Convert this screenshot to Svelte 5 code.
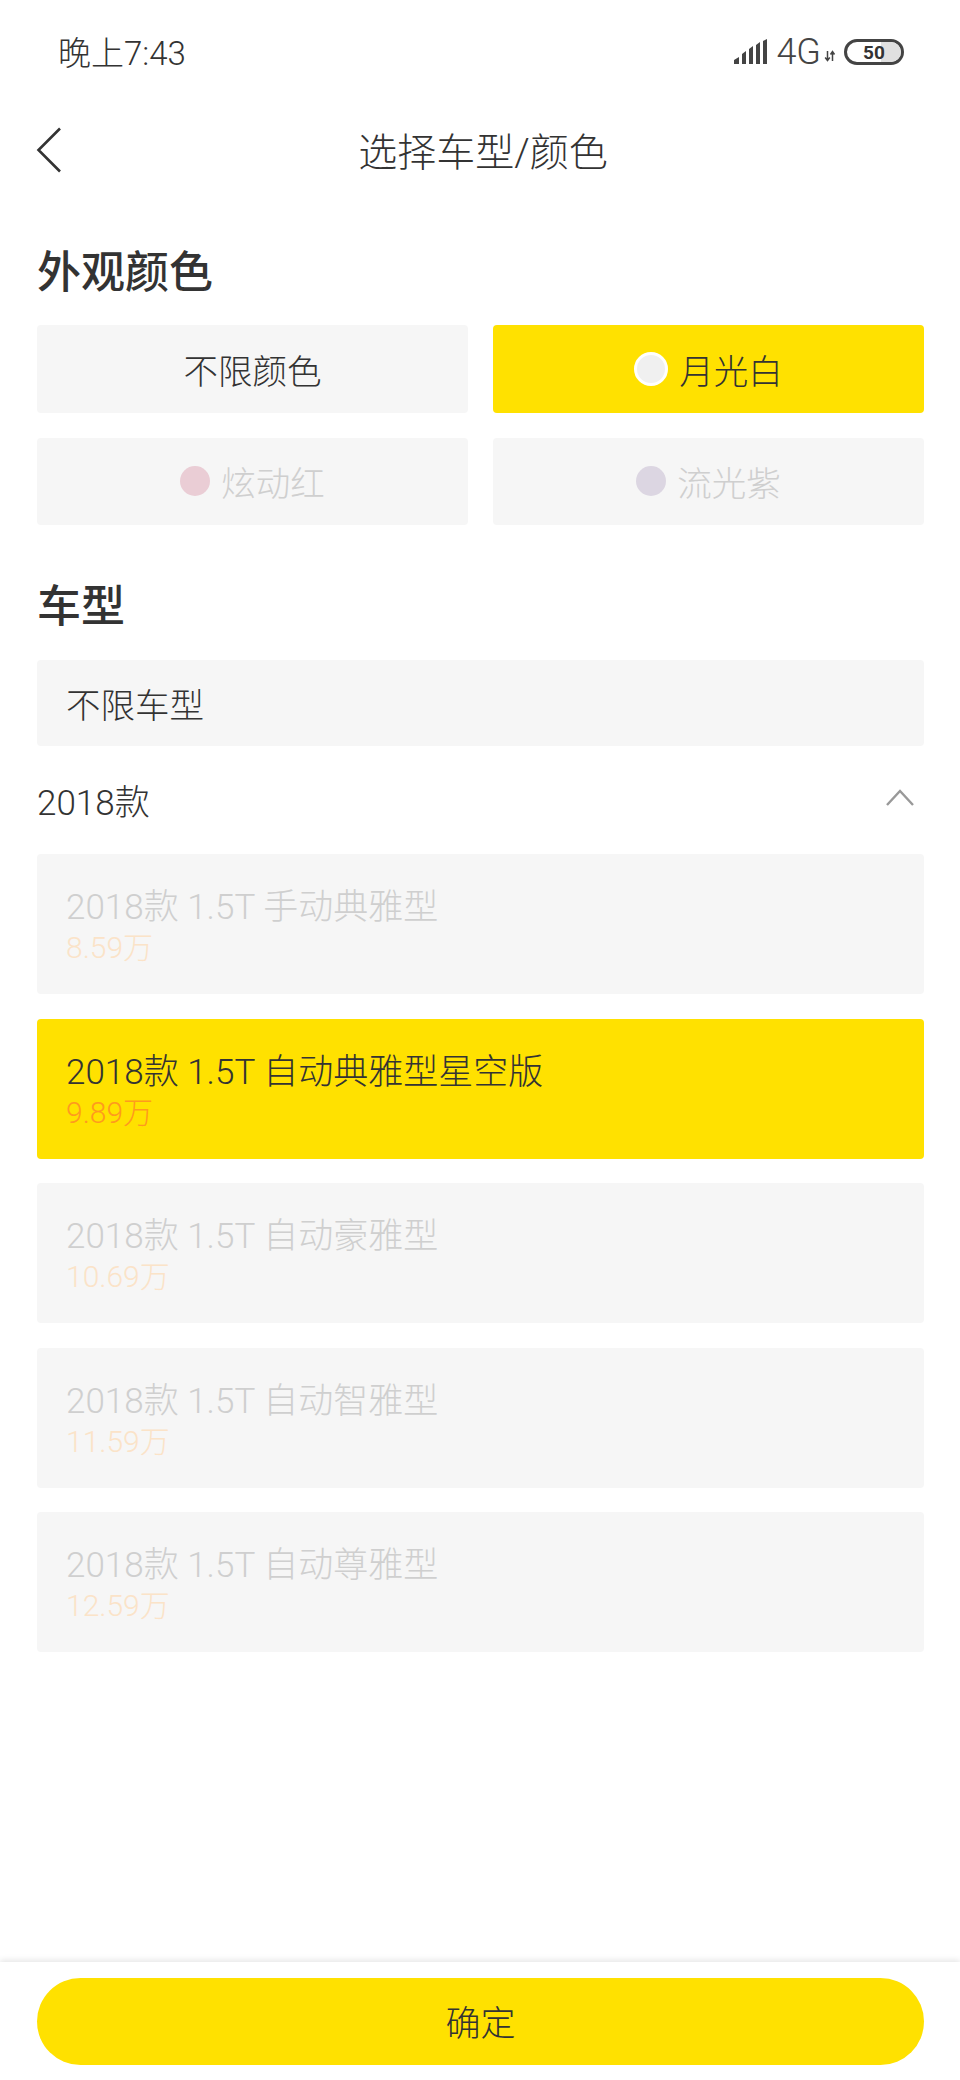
<script>
const colors = [
  { name: '不限颜色' },
  { name: '月光白', dot: '#f0f0f0', active: true },
  { name: '炫动红', dot: '#eacdd5', off: true },
  { name: '流光紫', dot: '#dcd6e2', off: true }
];

const models = [
  { name: '2018款 1.5T 手动典雅型', price: '8.59万', off: true },
  { name: '2018款 1.5T 自动典雅型星空版', price: '9.89万', active: true },
  { name: '2018款 1.5T 自动豪雅型', price: '10.69万', off: true },
  { name: '2018款 1.5T 自动智雅型', price: '11.59万', off: true },
  { name: '2018款 1.5T 自动尊雅型', price: '12.59万', off: true }
];
</script>

<div class="page">
  <div class="status">
    <span class="time">晚上7:43</span>
    <div class="indicators">
      <svg class="signal" width="36" height="26" viewBox="0 0 36 26">
        <path d="M1 25v-4l5-3v7zM9 25V15l4-3v13zM16 25V10l4-3v18zM23 25V6l4-3v22zM30 25V2l4-2v25z" fill="#444" />
      </svg>
      <span class="net">4G</span>
      <svg class="arrows" width="12" height="14" viewBox="0 0 12 14">
        <path d="M3.5 2v9M1.2 8.5l2.3 3 2.3-3M8.5 12V3M6.5 5.5l2-3 2 3" fill="none" stroke="#444" stroke-width="1.5" />
      </svg>
      <div class="battery">
        <span class="level"></span>
        <span class="pct">50</span>
      </div>
    </div>
  </div>

  <div class="nav">
    <svg class="back" width="26" height="46" viewBox="0 0 26 46">
      <path d="M24 1.5 2.5 23 24 44.5" fill="none" stroke="#333" stroke-width="2.6" />
    </svg>
    <span class="title">选择车型/颜色</span>
  </div>

  <h2 class="heading first">外观颜色</h2>
  <div class="colors">
    {#each colors as c}
      <div class="tile" class:active={c.active} class:off={c.off}>
        {#if c.dot}
          <span class="dot" class:ring={c.active} style="background:{c.dot}"></span>
        {/if}
        <span>{c.name}</span>
      </div>
    {/each}
  </div>

  <h2 class="heading second">车型</h2>
  <div class="any">不限车型</div>

  <div class="year">
    <span>2018款</span>
    <svg width="30" height="20" viewBox="0 0 30 20">
      <path d="M2 18 15 4l13 14" fill="none" stroke="#999" stroke-width="2.4" />
    </svg>
  </div>

  <div class="models">
    {#each models as m}
      <div class="model" class:active={m.active} class:off={m.off}>
        <div class="name">{m.name}</div>
        <div class="price">{m.price}</div>
      </div>
    {/each}
  </div>

  <div class="footer">
    <div class="confirm">确定</div>
  </div>
</div>

<style>
:global(body) {
  margin: 0;
  background: #fff;
}

.page {
  width: 960px;
  height: 2080px;
  display: flex;
  flex-direction: column;
  color: #333;
  font-family: Roboto, "Noto Sans CJK SC", sans-serif;
  font-weight: 300;
  overflow: hidden;
}

.status {
  height: 106px;
  box-sizing: border-box;
  padding: 31px 56px 0 58px;
  display: flex;
  justify-content: space-between;
  align-items: flex-start;
}

.time {
  font-size: 33px;
  line-height: 46px;
  color: #333;
}

.indicators {
  display: flex;
  align-items: center;
  height: 46px;
  margin-top: -2px;
}

.signal {
  margin-right: 7px;
}

.net {
  font-size: 36px;
  color: #444;
}

.arrows {
  margin: 8px 8px 0 3px;
}

.battery {
  position: relative;
  width: 54px;
  height: 20px;
  border: 3px solid #444;
  border-radius: 13px;
  display: flex;
  align-items: center;
  justify-content: center;
  overflow: hidden;
}

.level {
  position: absolute;
  top: 0;
  bottom: 0;
  right: 0;
  width: 20px;
  background: #e0e0e0;
}

.pct {
  position: relative;
  font-size: 19px;
  font-weight: 700;
}

.nav {
  position: relative;
  height: 86px;
  display: flex;
  align-items: center;
  justify-content: center;
}

.back {
  position: absolute;
  left: 36px;
  top: 21px;
}

.title {
  font-size: 39px;
  margin-left: 6px;
}

.heading {
  margin: 0;
  padding: 0 37px;
  font-size: 44px;
  line-height: 60px;
  font-weight: 500;
}

.first {
  margin-top: 51px;
}

.second {
  margin-top: 52px;
}

.colors {
  display: grid;
  grid-template-columns: 431px 431px;
  grid-auto-rows: 87.5px;
  gap: 25px;
  padding: 22px 37px 0;
}

.tile {
  background: #f6f6f6;
  border-radius: 4px;
  display: flex;
  align-items: center;
  justify-content: center;
  gap: 11px;
  font-size: 34.5px;
}

.active {
  background: #ffe100;
}

.off {
  color: #cfcfcf;
}

.dot {
  width: 30px;
  height: 30px;
  border-radius: 50%;
}

.ring {
  box-sizing: border-box;
  border: 3px solid #fff;
  width: 34px;
  height: 34px;
}

.any {
  margin: 22.5px 36px 0 37px;
  height: 86.5px;
  box-sizing: border-box;
  padding-left: 29px;
  background: #f6f6f6;
  border-radius: 4px;
  display: flex;
  align-items: center;
  font-size: 34.5px;
}

.year {
  height: 108px;
  box-sizing: border-box;
  padding: 0 45px 2px 37px;
  display: flex;
  align-items: center;
  justify-content: space-between;
  font-size: 35px;
}

.year svg {
  margin-top: -4px;
}

.models {
  display: flex;
  flex-direction: column;
  gap: 24.5px;
  padding: 0 36px 0 37px;
}

.model {
  height: 140px;
  box-sizing: border-box;
  padding: 32px 29px 0;
  background: #f6f6f6;
  border-radius: 4px;
}

.model.active {
  background: #ffe100;
}

.name {
  font-size: 35px;
  line-height: 44px;
}

.price {
  font-size: 30px;
  line-height: 36px;
  color: #ff9a1e;
}

.model.off .price {
  color: #fbe3c8;
}

.footer {
  margin-top: auto;
  height: 118px;
  box-sizing: border-box;
  padding: 16px 36px 0 37px;
  background: #fff;
  box-shadow: 0 -2px 6px rgba(0, 0, 0, 0.1);
}

.confirm {
  height: 87px;
  border-radius: 44px;
  background: #ffe100;
  display: flex;
  align-items: center;
  justify-content: center;
  font-size: 35px;
  padding-bottom: 2px;
  box-sizing: border-box;
}
</style>
